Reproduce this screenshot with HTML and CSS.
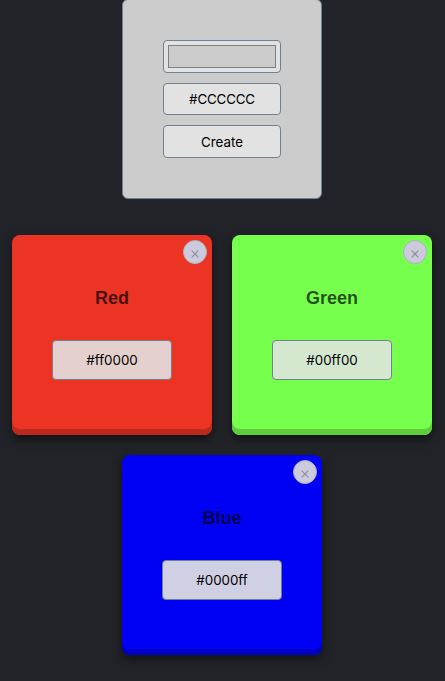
FILE: index.html
```html
<!DOCTYPE html>
<html lang="en">
<head>
<meta charset="utf-8">
<title>Colors</title>
<link rel="stylesheet" href="styles.css">
</head>
<body>
<form class="creator">
  <div class="field picker"><div class="swatch"></div></div>
  <div class="field value">#CCCCCC</div>
  <div class="field create">Create</div>
</form>
<main class="cards">
  <section class="card red">
    <div class="close"><svg width="8" height="8" viewBox="0 0 8 8"><path d="M.7.7l6.6 6.6M7.3.7L.7 7.3"/></svg></div>
    <h2>Red</h2>
    <div class="code">#ff0000</div>
  </section>
  <section class="card green">
    <div class="close"><svg width="8" height="8" viewBox="0 0 8 8"><path d="M.7.7l6.6 6.6M7.3.7L.7 7.3"/></svg></div>
    <h2>Green</h2>
    <div class="code">#00ff00</div>
  </section>
  <section class="card blue">
    <div class="close"><svg width="8" height="8" viewBox="0 0 8 8"><path d="M.7.7l6.6 6.6M7.3.7L.7 7.3"/></svg></div>
    <h2>Blue</h2>
    <div class="code">#0000ff</div>
  </section>
</main>
</body>
</html>
```
FILE: styles.css
```css
* { box-sizing: border-box; }
body {
  margin: 0;
  height: 681px;
  overflow: hidden;
  background: #222328;
  font-family: Inter, sans-serif;
  font-size: 13.333px;
  color: #000;
}
.creator {
  width: 200px;
  height: 200px;
  margin: -1px 0 0 122px;
  padding: 40px;
  display: flex;
  flex-direction: column;
  gap: 10px;
  background: #ccc;
  border: 1px solid slategray;
  border-radius: 6px;
}
.field {
  height: 33px;
  flex: none;
  display: flex;
  align-items: center;
  justify-content: center;
  background: #e2e2e2;
  border: 1px solid slategray;
  border-radius: 4px;
}
.value { height: 32px; letter-spacing: -.15px; }
.create { letter-spacing: .05px; padding-top: 1px; }
.picker { padding: 4px; }
.swatch {
  width: 100%;
  height: 100%;
  background: #ccc;
  border: 1px solid #808080;
}
.cards {
  display: flex;
  flex-wrap: wrap;
  justify-content: center;
  gap: 20px;
  margin-top: 36px;
  padding-right: 1px;
}
.card {
  position: relative;
  width: 200px;
  height: 200px;
  padding-top: 53px;
  border-radius: 8px;
  display: flex;
  flex-direction: column;
  align-items: center;
}
.red { background: #eb3424; box-shadow: inset 0 -6px 0 #bb291d, 0 4px 10px rgba(0,0,0,.5); }
.green { background: #77ff4d; box-shadow: inset 0 -6px 0 #5fcc3d, 0 4px 10px rgba(0,0,0,.5); }
.blue { background: #0000f5; box-shadow: inset 0 -6px 0 #0000c4, 0 4px 10px rgba(0,0,0,.5); }
h2 {
  margin: 0 0 31px;
  font: bold 18px/21px "Liberation Sans", sans-serif;
  color: rgba(0,0,0,.7);
}
.code {
  width: 120px;
  height: 40px;
  display: flex;
  align-items: center;
  justify-content: center;
  border: 1px solid slategray;
  border-radius: 4px;
}
.red .code { background: #e4d0cf; }
.green .code { background: #d4e8d0; }
.blue .code { background: #d0d0e5; }
.close {
  position: absolute;
  top: 5px;
  right: 5px;
  width: 24px;
  height: 24px;
  padding-top: 3px;
  display: flex;
  align-items: center;
  justify-content: center;
  border: 1px solid #afafc0;
  border-radius: 50%;
  background: #cccbdd;
}
.close path { fill: none; stroke: #8e8e9b; stroke-width: 1.15; }
```
